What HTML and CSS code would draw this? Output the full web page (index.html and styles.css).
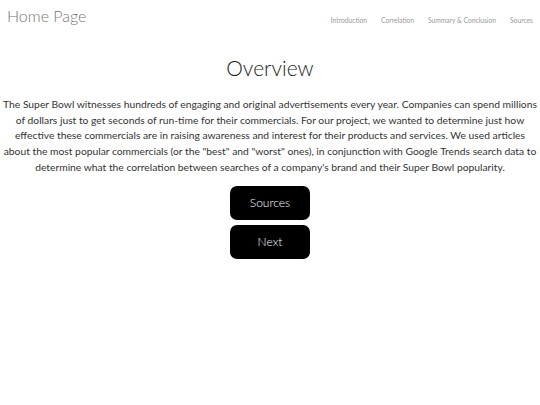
FILE: index.html
```html
<!DOCTYPE html>
<html>
<head>
<meta charset="utf-8">
<title>Home Page</title>
<link rel="stylesheet" href="styles.css">
</head>
<body>
<header class="topbar">
  <a class="brand" href="#">Home Page</a>
  <nav class="nav">
    <a href="#">Introduction</a>
    <a href="#">Correlation</a>
    <a href="#">Summary &amp; Conclusion</a>
    <a href="#">Sources</a>
  </nav>
</header>
<main class="content">
  <h1 class="title">Overview</h1>
  <p class="intro">The Super Bowl witnesses hundreds of engaging and original advertisements every year. Companies can spend millions of dollars just to get seconds of run-time for their commercials. For our project, we wanted to determine just how effective these commercials are in raising awareness and interest for their products and services. We used articles about the most popular commercials (or the "best" and "worst" ones), in conjunction with Google Trends search data to determine what the correlation between searches of a company's brand and their Super Bowl popularity.</p>
  <div class="actions">
    <a class="btn" href="#">Sources</a>
    <a class="btn" href="#">Next</a>
  </div>
</main>
</body>
</html>
```
FILE: styles.css
```css
html, body {
  margin: 0;
  padding: 0;
  background: #fff;
}
body {
  font-family: "Lato", "Open Sans", sans-serif;
  color: #333;
}
a { text-decoration: none; }
.topbar {
  display: flex;
  justify-content: space-between;
  align-items: flex-start;
  padding: 7px 7px 0 7px;
  height: 46px;
  box-sizing: border-box;
}
.brand {
  font-size: 16px;
  font-weight: 300;
  color: #777;
  line-height: 18px;
}
.nav {
  display: flex;
  gap: 14px;
  padding-top: 8px;
}
.nav a {
  font-size: 6.7px;
  color: #999;
  line-height: 10px;
}
.content {
  display: flex;
  flex-direction: column;
  align-items: center;
  padding: 0 2px;
}
.title {
  margin: 9px 0 0 0;
  font-size: 21px;
  font-weight: 300;
  color: #222;
  line-height: 26px;
}
.intro {
  margin: 16px 0 0 0;
  font-size: 10.3px;
  line-height: 15.7px;
  text-align: center;
  color: #333;
}
.actions {
  display: flex;
  flex-direction: column;
  gap: 5px;
  margin-top: 10px;
}
.btn {
  width: 80px;
  height: 34px;
  border-radius: 7px;
  background: #000;
  color: #fff;
  font-size: 12px;
  font-weight: 300;
  display: flex;
  align-items: center;
  justify-content: center;
}
```
